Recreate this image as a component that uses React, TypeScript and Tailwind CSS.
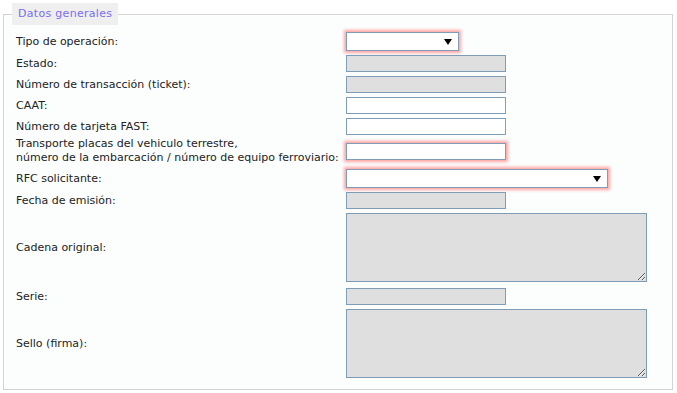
const font = { fontFamily: '"DejaVu Sans", Verdana, sans-serif' };

const Field = ({ gray, glow }: { gray?: boolean; glow?: boolean }) => (
    <div className={`w-[160px] h-[17px] border border-[#7f9db9] ${gray ? "bg-[#dfdfdf]" : "bg-white"} ${glow ? "shadow-[0_0_3px_2px_#ffa3a3]" : ""}`} />
);

const Select = ({ w }: { w: string }) => (
    <div className={`${w} h-[19px] border border-[#7f9db9] bg-white shadow-[0_0_3px_2px_#ffa3a3] flex items-center justify-end pr-[6px]`}>
        <div className="w-0 h-0 border-l-[4px] border-r-[4px] border-t-[6px] border-l-transparent border-r-transparent border-t-black" />
    </div>
);

const Area = () => (
    <textarea readOnly className="block w-[301px] h-[69px] border border-[#7f9db9] bg-[#dfdfdf] outline-none resize" />
);

const Row = ({ label, children, cls }: { label: React.ReactNode; children: React.ReactNode; cls?: string }) => (
    <div className={`flex items-center pl-[4px] ${cls ?? ""}`}>
        <div className="w-[330px] shrink-0 leading-[14px]">{label}</div>
        {children}
    </div>
);

export default function App() {
    return (
        <div className="w-[677px] h-[393px] bg-white text-[11px] text-[#222]" style={font}>
            <fieldset className="ml-[3px] mt-[3px] w-[670px] h-[387px] border border-[#d4d4d4] bg-[#fcfefe] pl-[8px] pr-0 pt-[7px] m-0">
                <legend className="bg-[#efefef] text-[#7b6cf2] px-[6px] h-[22px] leading-[22px] tracking-[0.3px]">Datos generales</legend>
                <div className="flex flex-col">
                    <Row label="Tipo de operación:" cls="h-[19px]"><Select w="w-[113px]" /></Row>
                    <Row label="Estado:" cls="mt-[4px]"><Field gray /></Row>
                    <Row label="Número de transacción (ticket):" cls="mt-[4px]"><Field gray /></Row>
                    <Row label="CAAT:" cls="mt-[4px]"><Field /></Row>
                    <Row label="Número de tarjeta FAST:" cls="mt-[4px]"><Field /></Row>
                    <Row label={<>Transporte placas del vehiculo terrestre,<br />número de la embarcación / número de equipo ferroviario:</>} cls="mt-[2px]"><Field glow /></Row>
                    <Row label="RFC solicitante:" cls="mt-[4px]"><Select w="w-[262px]" /></Row>
                    <Row label="Fecha de emisión:" cls="mt-[4px]"><Field gray /></Row>
                    <Row label="Cadena original:" cls="mt-[4px]"><Area /></Row>
                    <Row label="Serie:" cls="mt-[6px]"><Field gray /></Row>
                    <Row label="Sello (firma):" cls="mt-[4px]"><Area /></Row>
                </div>
            </fieldset>
        </div>
    );
}
